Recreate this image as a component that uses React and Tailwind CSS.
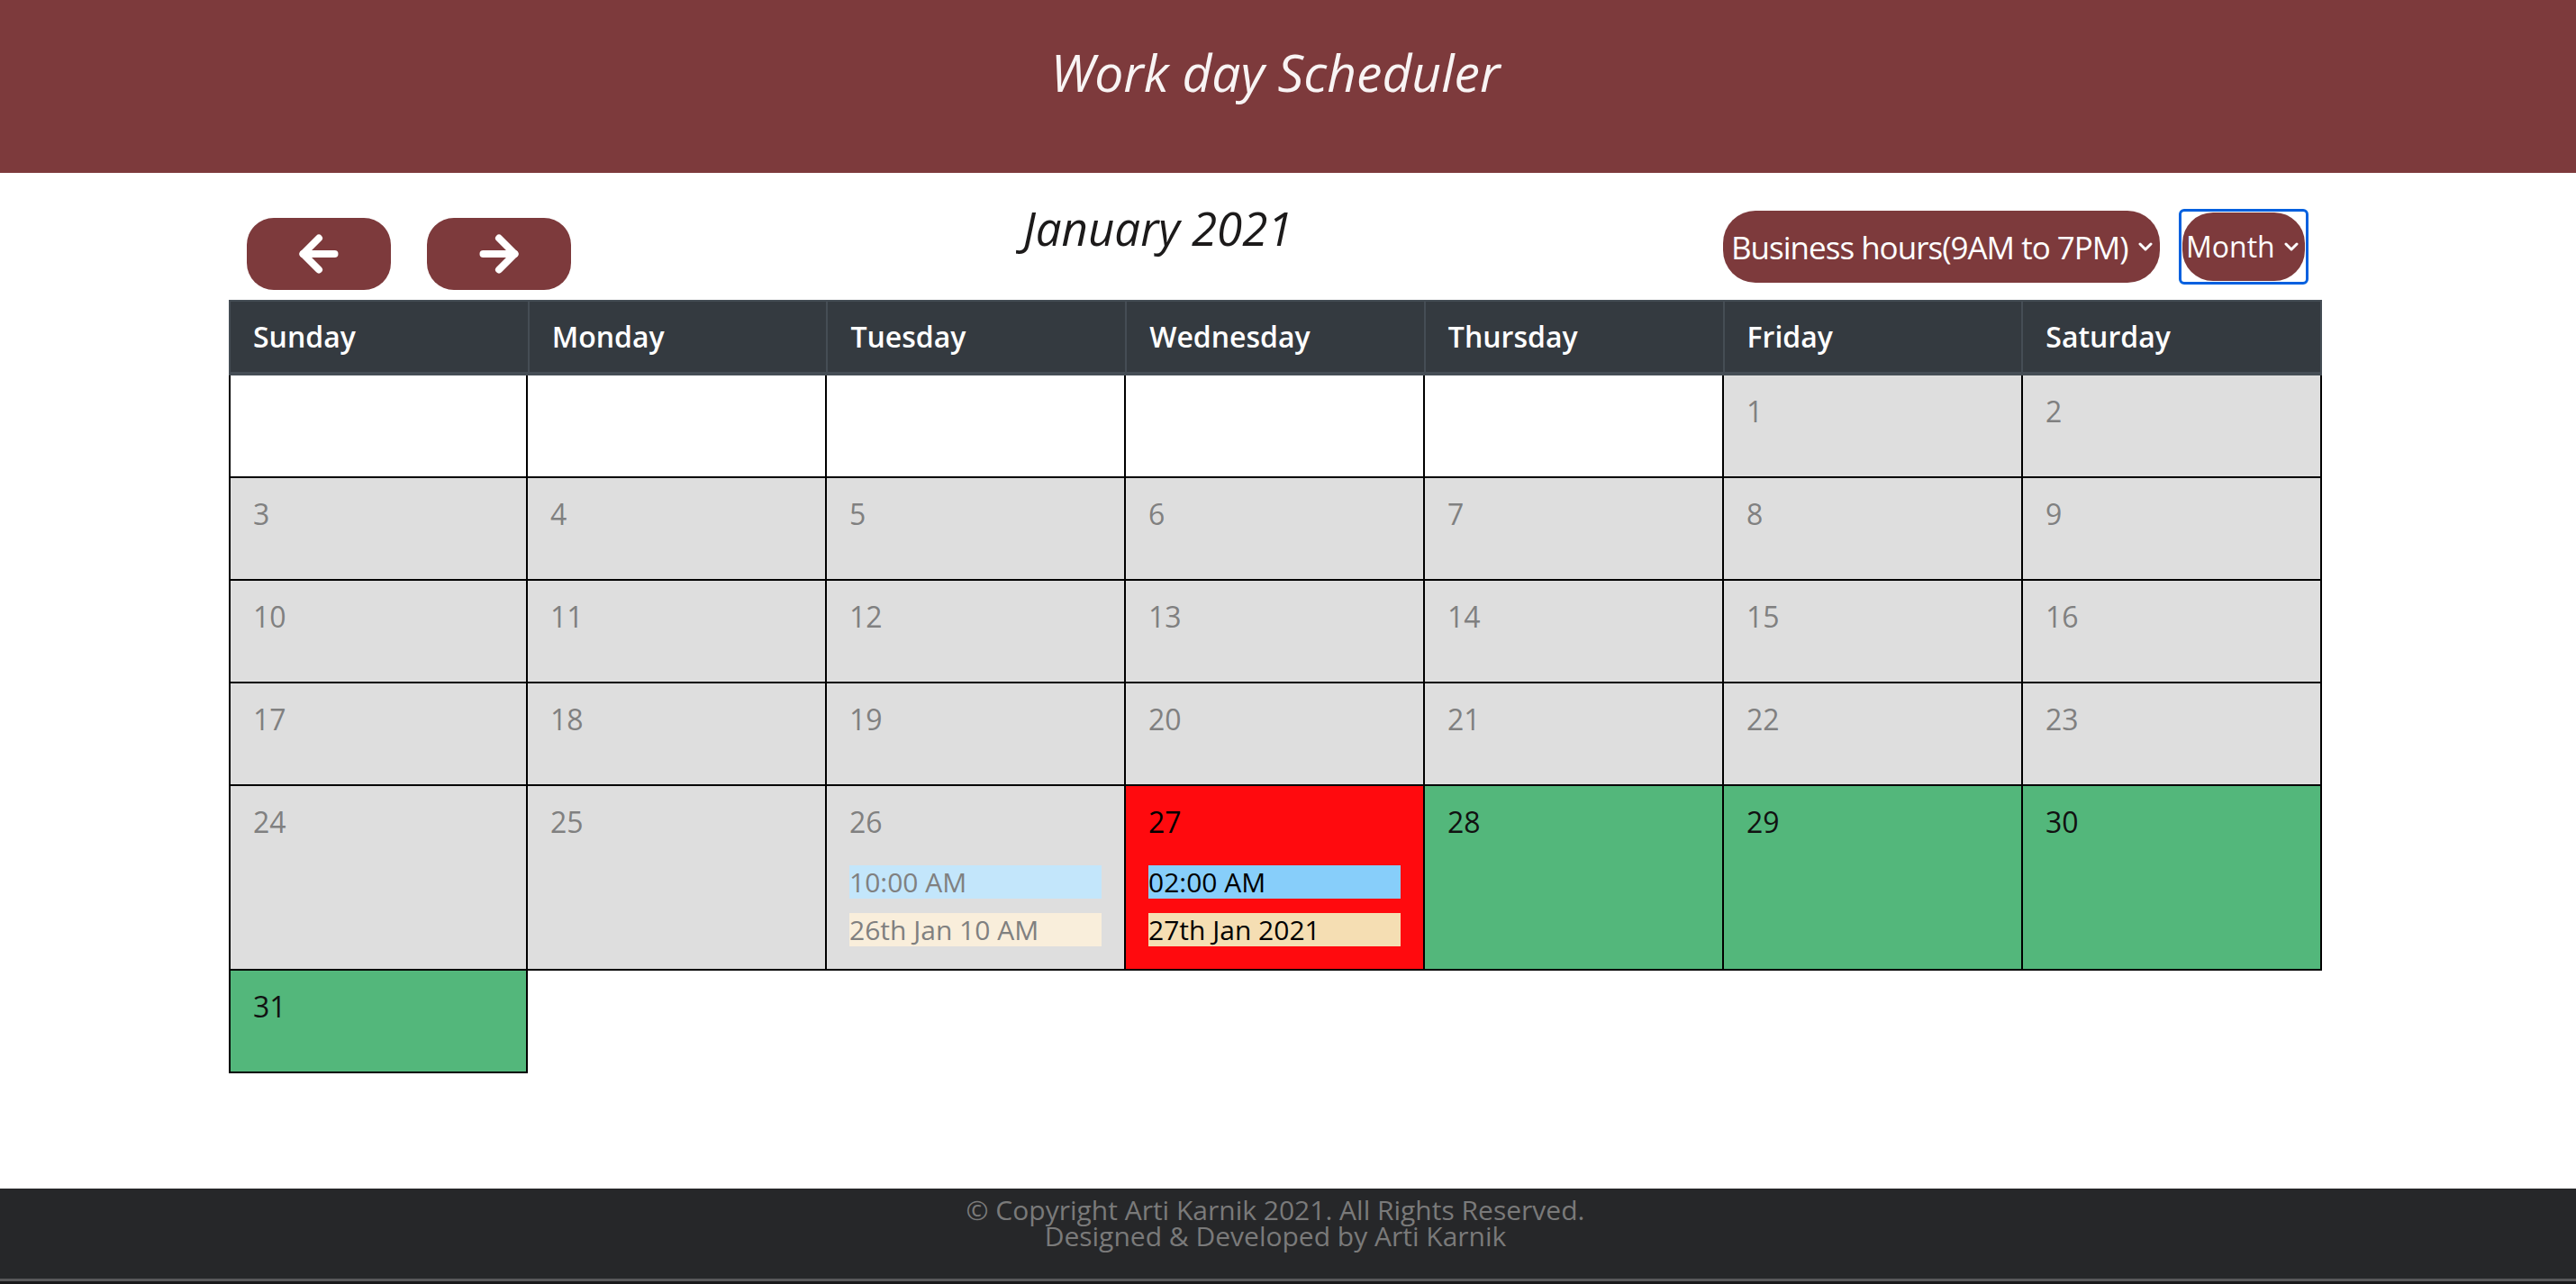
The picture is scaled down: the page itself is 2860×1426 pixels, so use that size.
import { ArrowLeft, ArrowRight } from "lucide-react";

const weeks = [
  [null, null, null, null, null, 1, 2],
  [3, 4, 5, 6, 7, 8, 9],
  [10, 11, 12, 13, 14, 15, 16],
  [17, 18, 19, 20, 21, 22, 23],
  [24, 25, 26, 27, 28, 29, 30],
  [31],
];

const days = ["Sunday", "Monday", "Tuesday", "Wednesday", "Thursday", "Friday", "Saturday"];

const events = {
  26: [
    { text: "10:00 AM", cls: "bg-[#c3e6fb] text-[#808080]" },
    { text: "26th Jan 10 AM", cls: "bg-[#f9eedb] text-[#808080]" },
  ],
  27: [
    { text: "02:00 AM", cls: "bg-[#87cefa] text-black" },
    { text: "27th Jan 2021", cls: "bg-[#f5deb3] text-black" },
  ],
};

function Chevron() {
  return (
    <svg width="16" height="10" viewBox="0 0 16 10" fill="none">
      <path d="M2 2l6 6 6-6" stroke="white" strokeWidth="3" strokeLinecap="round" strokeLinejoin="round" />
    </svg>
  );
}

function DayCell({ day, first }) {
  const edge = first ? "border-l-2" : "";
  if (day === null) {
    return <div className={`min-h-[114px] border-r-2 border-b-2 border-black bg-white ${edge}`}></div>;
  }
  let cls = "bg-[#dedede] text-[#808080]";
  if (day === 27) cls = "bg-[#ff0a0e] text-black";
  if (day > 27) cls = "bg-[#53b77b] text-[#111111]";
  const ev = events[day];

  return (
    <div className={`min-h-[114px] border-r-2 border-b-2 border-black px-[25px] pt-[16px] ${edge} ${cls}`}>
      <div className="text-[32px] leading-[48px]">{day}</div>
      {ev && (
        <div className="mt-[24px] pb-[25px] flex flex-col gap-[16px]">
          {ev.map((e) => (
            <div key={e.text} className={`h-[37px] text-[30px] leading-[37px] whitespace-nowrap ${e.cls}`}>
              {e.text}
            </div>
          ))}
        </div>
      )}
    </div>
  );
}

export default function App() {
  return (
    <div className="min-h-[1426px] flex flex-col bg-white" style={{ fontFamily: '"Open Sans", sans-serif' }}>
      <header className="h-[192px] bg-[#7d3a3c] pt-[52px] pr-[28px] text-center">
        <h1 className="text-[57px] leading-none italic text-[#f8f4f4]">Work day Scheduler</h1>
      </header>

      <main className="flex-1 pr-[28px]">
        <div className="mx-auto w-[2324px]">
          <div className="flex h-[141px] items-start">
            <div className="ml-[20px] mt-[50px] flex gap-[40px]">
              <button className="flex h-[80px] w-[160px] items-center justify-center rounded-[30px] bg-[#7d3a3c] text-white">
                <ArrowLeft size={60} strokeWidth={3.2} />
              </button>
              <button className="flex h-[80px] w-[160px] items-center justify-center rounded-[30px] bg-[#7d3a3c] text-white">
                <ArrowRight size={60} strokeWidth={3.2} />
              </button>
            </div>

            <h2 className="ml-[502px] mt-[36px] text-[51px] leading-none italic text-[#1c1a1a]">January 2021</h2>

            <div className="ml-auto mr-[15px] flex items-start gap-[21px]">
              <div className="mt-[42px] flex h-[80px] w-[485px] items-center rounded-[36px] bg-[#7d3a3c] pl-[9px] pr-[8px] text-white">
                <span className="text-[35px] leading-none tracking-[-1px] whitespace-nowrap">Business hours(9AM to 7PM)</span>
                <span className="ml-auto">
                  <Chevron />
                </span>
              </div>
              <div className="mt-[40px] rounded-[6px] border-[3px] border-[#0060df] p-[1px]">
                <div className="flex h-[76px] w-[136px] items-center rounded-[34px] bg-[#7d3a3c] pl-[4px] pr-[7px] text-white">
                  <span className="text-[32px] leading-none">Month</span>
                  <span className="ml-auto">
                    <Chevron />
                  </span>
                </div>
              </div>
            </div>
          </div>

          <div className="grid grid-cols-7 border-l-2 border-t-2 border-b-4 border-[#454d55] bg-[#343a40] text-white">
            {days.map((d) => (
              <div key={d} className="border-r-2 border-[#454d55] px-[25px] py-[15px] text-[32px] leading-[48px] font-semibold">
                {d}
              </div>
            ))}
          </div>

          {weeks.map((w, i) => (
            <div key={i} className="grid grid-cols-7">
              {w.map((day, j) => (
                <DayCell key={j} day={day} first={j === 0} />
              ))}
            </div>
          ))}
        </div>
      </main>

      <footer className="bg-[#262729]">
        <div className="h-[100px] pt-[9px] pr-[28px] text-center text-[30px] leading-[29px] text-[#7a7a7a]">
          <p>© Copyright Arti Karnik 2021. All Rights Reserved.</p>
          <p>Designed &amp; Developed by Arti Karnik</p>
        </div>
        <div className="h-[3px] bg-[#58585a]"></div>
        <div className="h-[3px] bg-[#18181a]"></div>
      </footer>
    </div>
  );
}
